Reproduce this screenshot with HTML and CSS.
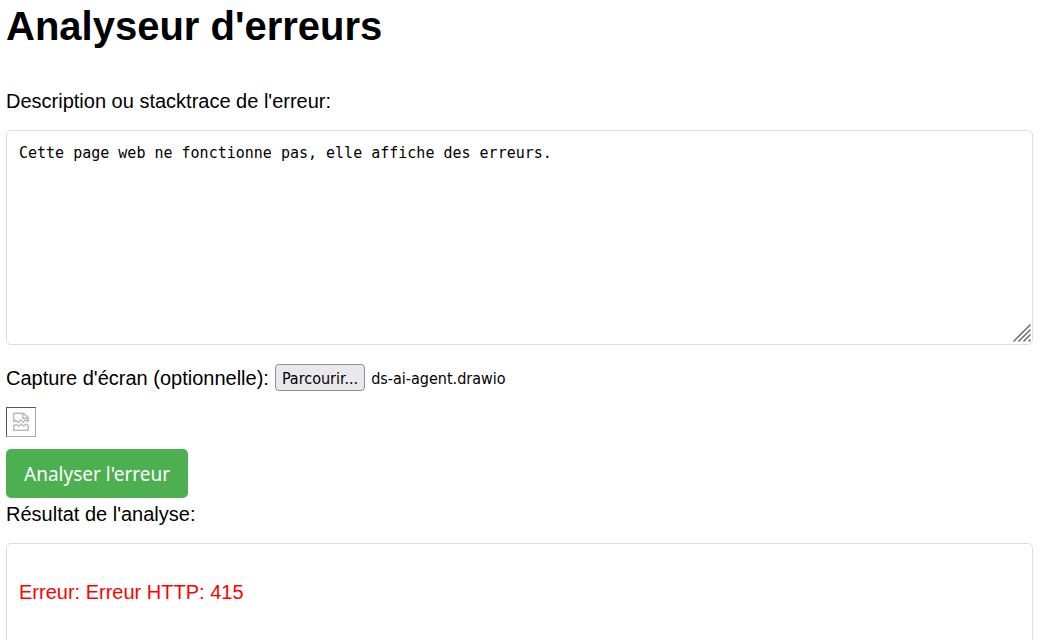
FILE: index.html
```html
<!DOCTYPE html>
<html lang="fr">
<head>
<meta charset="utf-8">
<meta name="viewport" content="width=device-width, initial-scale=1">
<title>Analyseur d'erreurs</title>
<link rel="stylesheet" href="styles.css">
</head>
<body>
<main class="page">
  <h1 class="title">Analyseur d'erreurs</h1>
  <form class="form">
    <label class="label" for="description">Description ou stacktrace de l'erreur:</label>
    <div class="editor">
      <textarea class="textarea" id="description" spellcheck="false">Cette page web ne fonctionne pas, elle affiche des erreurs.</textarea>
      <svg class="grip" width="18" height="18" viewBox="0 0 18 18" aria-hidden="true">
        <path d="M.5 17.5l17-17M5.500 17.500l12-12M10.500 17.500l7-7M15.500 17.500l2-2" fill="none" stroke="#6b6b70" stroke-width="1.500"/>
      </svg>
    </div>
    <div class="file-row">
      <label class="file-label" for="browse">Capture d'écran (optionnelle):</label>
      <button class="browse" id="browse" type="button">Parcourir...</button>
      <output class="file-name" for="browse">ds-ai-agent.drawio</output>
    </div>
    <div class="preview">
      <svg width="18" height="20" viewBox="0 0 18 20" aria-hidden="true">
        <g fill="none" stroke="#bcbcbc" stroke-width="1.500">
          <path d="M1.700 9.500V1.200h9.500l5 4.500v3.800l-2.500-1.500-2.500 2-2.500-2-2.500 2.500-2.500-2zM10.700 1.500v4.700H16"/>
          <path d="M1.700 18.300v-4.800l2.500-1 2.500 2 2.500-2.500 2.500 2 2.500-2 2 1.500v4.800z"/>
        </g>
      </svg>
    </div>
    <button class="submit" type="button">Analyser l'erreur</button>
  </form>
  <section class="result">
    <div class="result-label">Résultat de l'analyse:</div>
    <div class="result-box"><p class="error">Erreur: Erreur HTTP: 415</p></div>
  </section>
</main>
</body>
</html>
```
FILE: styles.css
```css
* {
  box-sizing: border-box;
}

body {
  margin: 0;
  background: #fff;
  color: #000;
  font: 20px/24px "Liberation Sans", Arial, sans-serif;
}

.page {
  padding: 2px 7px 0 6px;
}

.title {
  margin: 0 0 39px;
  font-size: 40px;
  line-height: 48px;
}

.form {
  display: flex;
  flex-direction: column;
  align-items: flex-start;
}

.label {
  margin-bottom: 17px;
}

.editor {
  position: relative;
  width: 100%;
}

.textarea {
  display: block;
  width: 100%;
  height: 215px;
  padding: 12px;
  border: 1px solid #ddd;
  border-radius: 5px;
  background: #fff;
  color: #000;
  font: 15px/20px "DejaVu Sans Mono", monospace;
  resize: none;
}

.grip {
  position: absolute;
  right: 2px;
  bottom: 3px;
  pointer-events: none;
}

.file-row {
  display: flex;
  align-items: center;
  gap: 6px;
  margin-top: 19px;
}

.browse {
  height: 27px;
  padding: 2px 6px 0;
  border: 1px solid #8f8f9d;
  border-radius: 4px;
  background: #e9e9ed;
  color: #000;
  font: 16px/22px "DejaVu Sans Condensed", Tahoma, sans-serif;
}

.file-name {
  padding-top: 2px;
  font: 16px/22px "DejaVu Sans Condensed", Tahoma, sans-serif;
}

.preview {
  display: flex;
  align-items: center;
  justify-content: center;
  width: 30px;
  height: 30px;
  margin-top: 16px;
  border: 1px solid;
  border-color: #55555a #a8a8a8 #a8a8a8 #55555a;
}

.submit {
  margin-top: 12px;
  padding: 13px 18px 11px;
  border: 0;
  border-radius: 5px;
  background: #4caf50;
  color: #fff;
  font: 19px/25px "Noto Sans", sans-serif;
}

.result-label {
  margin: 4px 0 17px;
}

.result-box {
  padding: 36px 12px 40px;
  border: 1px solid #ddd;
  border-radius: 5px;
}

.error {
  margin: 0;
  color: #f00;
}
```
